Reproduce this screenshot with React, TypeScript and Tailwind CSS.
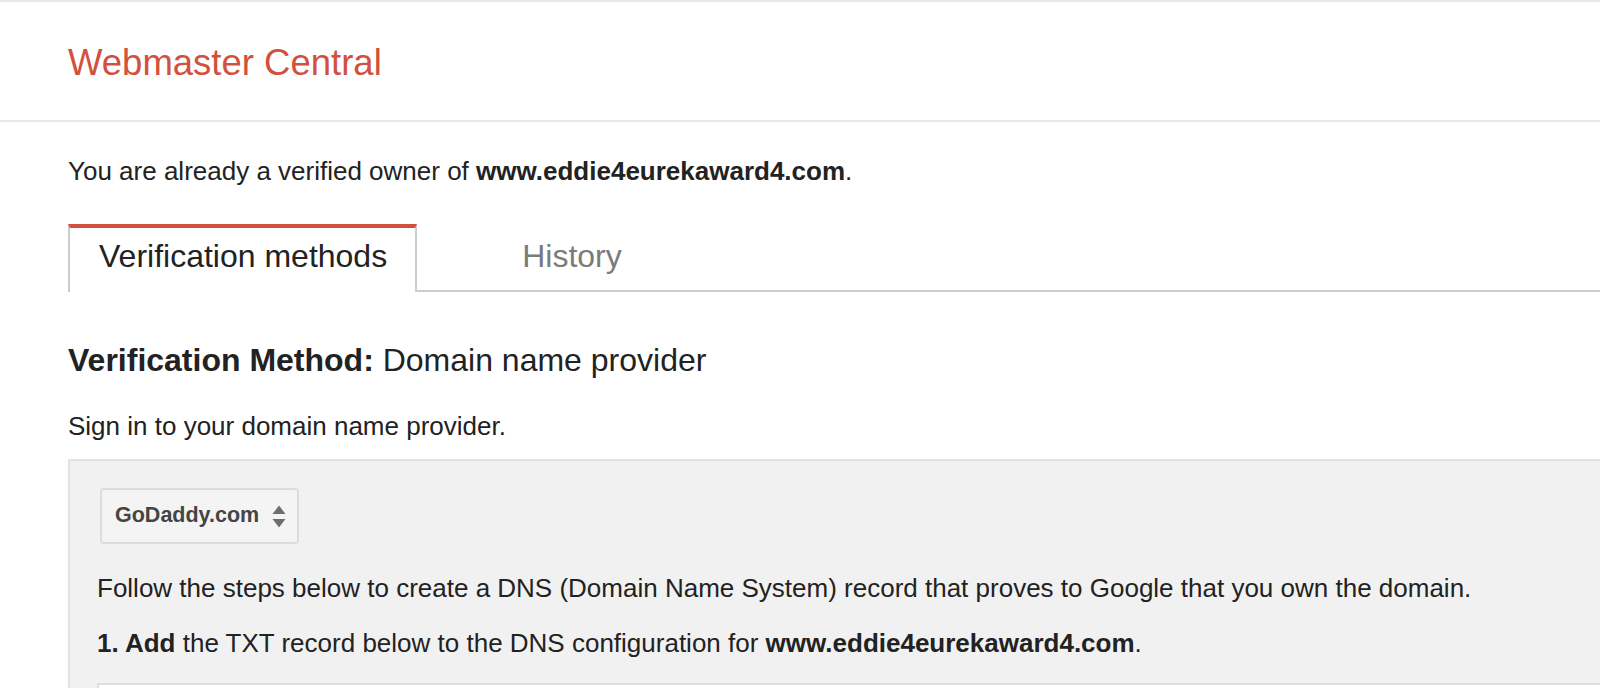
import React, { useState } from 'react';

function SortArrows() {
  return (
    <svg width="14" height="23" viewBox="0 0 14 23" className="ml-[13px] shrink-0">
      <path d="M7 0.5 L13.5 9 H0.5 Z" fill="#6e6e6e" />
      <path d="M0.5 14 H13.5 L7 22.5 Z" fill="#6e6e6e" />
    </svg>
  );
}

function App() {
  const [tab, setTab] = useState('methods');

  return (
    <div className="w-full h-screen overflow-hidden bg-white text-[#222] font-['Liberation_Sans',Arial,sans-serif]">
      <header className="flex items-center h-[122px] pt-[4px] pl-[68px] border-t-2 border-b-2 border-[#e8e8e8]">
        <h1 className="text-[36.5px] leading-none text-[#d2503e]">Webmaster Central</h1>
      </header>

      <main className="pl-[68px]">
        <p className="mt-[36px] text-[26px] leading-none">
          You are already a verified owner of <b>www.eddie4eurekaward4.com</b>.
        </p>

        <div className="flex mt-[40px] border-b-2 border-[#cdcdcd]">
          <button
            onClick={() => setTab('methods')}
            className={`-mb-[2px] h-[68px] pl-[29px] pr-[28px] pt-[12px] text-left text-[32px] leading-none border-t-4 ${
              tab === 'methods'
                ? 'border-x-2 border-t-[#d2503e] border-x-[#cdcdcd] bg-white text-[#222]'
                : 'border-transparent text-[#7b7b7b]'
            } flex items-start`}
          >
            Verification methods
          </button>
          <button
            onClick={() => setTab('history')}
            className={`-mb-[2px] h-[68px] pl-[105px] pr-[28px] pt-[12px] text-left text-[32px] leading-none border-t-4 ${
              tab === 'history'
                ? 'border-x-2 border-t-[#d2503e] border-x-[#cdcdcd] bg-white text-[#222]'
                : 'border-transparent text-[#7b7b7b]'
            } flex items-start`}
          >
            History
          </button>
        </div>

        <h2 className="mt-[52px] text-[32px] leading-none font-normal">
          <b>Verification Method:</b> Domain name provider
        </h2>

        <p className="mt-[37px] text-[26px] leading-none">Sign in to your domain name provider.</p>

        <section className="mt-[20px] pl-[27px] pt-[27px] bg-[#f1f1f1] border-t-2 border-l-2 border-[#e2e2e2]">
          <div className="ml-[3px] flex items-center w-[199px] h-[56px] pl-[13px] rounded-[4px] border-2 border-[#dcdcdc] bg-[#f4f4f4]">
            <span className="text-[21.5px] leading-none font-bold text-[#444]">GoDaddy.com</span>
            <SortArrows />
          </div>

          <p className="mt-[31px] text-[26px] leading-none">
            Follow the steps below to create a DNS (Domain Name System) record that proves to Google that you own the domain.
          </p>

          <p className="mt-[29px] text-[26px] leading-none">
            <b>1. Add</b> the TXT record below to the DNS configuration for <b>www.eddie4eurekaward4.com</b>.
          </p>

          <div className="mt-[27px] h-[40px] bg-white border-t-2 border-l-2 border-[#dedede]" />
        </section>
      </main>
    </div>
  );
}

export default App;
